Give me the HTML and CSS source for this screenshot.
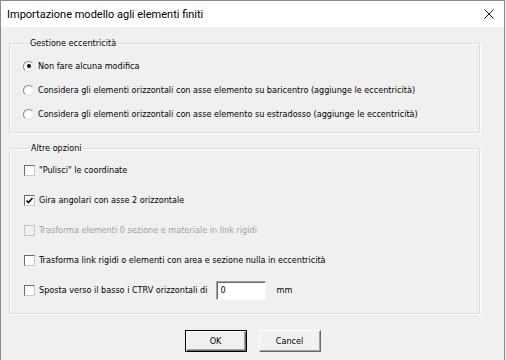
FILE: index.html
```html
<!DOCTYPE html>
<html lang="it">
<head>
<meta charset="utf-8">
<title>Importazione modello agli elementi finiti</title>
<link rel="stylesheet" href="styles.css">
</head>
<body>
<div class="window">
  <div class="titlebar">
    <span class="title">Importazione modello agli elementi finiti</span>
    <svg class="close" width="10" height="10" viewBox="0 0 10 10"><path d="M0.5 0.5 L9.5 9.5 M9.5 0.5 L0.5 9.5" stroke="#1a1a1a" stroke-width="1" fill="none"/></svg>
  </div>
  <div class="content">
    <fieldset class="group g1">
      <legend>Gestione eccentricità</legend>
      <div class="row"><span class="radio checked"></span><span>Non fare alcuna modifica</span></div>
      <div class="row"><span class="radio"></span><span>Considera gli elementi orizzontali con asse elemento su baricentro (aggiunge le eccentricità)</span></div>
      <div class="row"><span class="radio"></span><span>Considera gli elementi orizzontali con asse elemento su estradosso (aggiunge le eccentricità)</span></div>
    </fieldset>
    <fieldset class="group g2">
      <legend>Altre opzioni</legend>
      <div class="row"><span class="check"></span><span>"Pulisci" le coordinate</span></div>
      <div class="row"><span class="check"><svg width="9" height="9" viewBox="0 0 9 9"><path d="M1.5 4.5 L3.5 6.5 L7.5 2" stroke="#000" stroke-width="1.6" fill="none"/></svg></span><span>Gira angolari con asse 2 orizzontale</span></div>
      <div class="row disabled"><span class="check"></span><span>Trasforma elementi 0 sezione e materiale in link rigidi</span></div>
      <div class="row"><span class="check"></span><span>Trasforma link rigidi o elementi con area e sezione nulla in eccentricità</span></div>
      <div class="row"><span class="check"></span><span>Sposta verso il basso i CTRV orizzontali di</span><span class="input">0</span><span class="unit">mm</span></div>
    </fieldset>
    <div class="buttons">
      <button class="btn default">OK</button>
      <button class="btn">Cancel</button>
    </div>
  </div>
</div>
</body>
</html>
```
FILE: styles.css
```css
html, body {
  margin: 0;
  padding: 0;
}
body {
  width: 506px;
  height: 360px;
  overflow: hidden;
  background: #efefef;
}
.window {
  width: 503px;
  height: 359px;
  border: 1px solid #8c8c8c;
  border-bottom: none;
  background: #f0f0f0;
  display: flex;
  flex-direction: column;
}
.titlebar {
  height: 26px;
  background: #fff;
  display: flex;
  align-items: center;
  justify-content: space-between;
  padding: 0 10px 0 6px;
}
.title {
  font-family: Roboto, "Liberation Sans", sans-serif;
  font-size: 11px;
  color: #000;
}
.close {
  display: block;
  margin-top: -1px;
}
.content {
  padding: 10px 24px 0 8px;
  font-family: "DejaVu Sans Condensed", "DejaVu Sans", sans-serif;
  font-stretch: condensed;
  font-size: 9px;
  color: #000;
}
.group {
  margin: 0;
  border: 1px solid #dcdcdc;
  box-shadow: inset 1px 1px 0 #fff, 1px 1px 0 #fff;
  padding: 0;
}
.group legend {
  margin-left: 6px;
  padding: 0 1px;
  line-height: 13px;
}
.g1 {
  padding: 4px 0 6px 13px;
}
.g2 {
  margin-top: 9px;
  padding: 0 0 8px 14px;
}
.row {
  display: flex;
  align-items: center;
  gap: 4px;
  height: 24px;
}
.g2 .row {
  height: 30px;
}
.radio {
  width: 9px;
  height: 9px;
  border-radius: 50%;
  border: 1px solid;
  border-color: #8a8a8a #e3e3e3 #e3e3e3 #8a8a8a;
  background: #fff;
  display: flex;
  align-items: center;
  justify-content: center;
  flex: none;
}
.radio.checked::after {
  content: "";
  width: 4px;
  height: 4px;
  border-radius: 50%;
  background: #000;
}
.check {
  width: 9px;
  height: 9px;
  border: 1px solid;
  border-color: #6a6a6a #c8c8c8 #c8c8c8 #6a6a6a;
  background: #fff;
  display: flex;
  align-items: center;
  justify-content: center;
  flex: none;
}
.check svg {
  display: block;
}
.disabled {
  color: #a0a0a0;
}
.disabled .check {
  border-color: #c4c4c4;
  background: #f0f0f0;
}
.input {
  width: 44px;
  height: 17px;
  margin-left: 4px;
  padding-left: 4px;
  background: #fff;
  border: 1px solid;
  border-color: #a0a0a0 #f8f8f8 #f8f8f8 #a0a0a0;
  box-shadow: inset 1px 1px 0 #696969;
  display: flex;
  align-items: center;
}
.unit {
  margin-left: 7px;
}
.buttons {
  display: flex;
  justify-content: center;
  gap: 12px;
  margin-top: 16px;
  padding-left: 16px;
}
.btn {
  width: 62px;
  height: 22px;
  font-family: "DejaVu Sans Condensed", "DejaVu Sans", sans-serif;
  font-stretch: condensed;
  font-size: 9px;
  color: #000;
  background: #f0f0f0;
  border: 1px solid;
  border-color: #fff #696969 #696969 #fff;
  box-shadow: inset -1px -1px 0 #a0a0a0;
  padding: 0;
}
.btn.default {
  border-color: #000;
  box-shadow: inset 1px 1px 0 #fff, inset -1px -1px 0 #696969, inset -2px -2px 0 #a0a0a0;
}
```
